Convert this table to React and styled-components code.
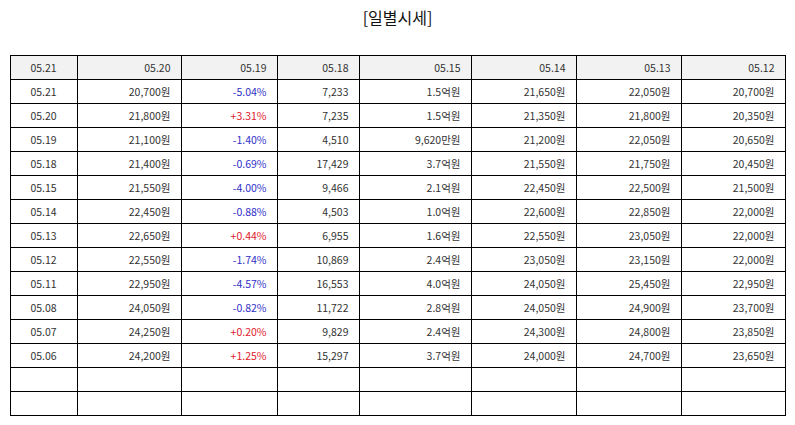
import React from 'react';
import styled, { createGlobalStyle } from 'styled-components';

const headers = ['05.21', '05.20', '05.19', '05.18', '05.15', '05.14', '05.13', '05.12'];
const colWidths = [67, 104, 96, 82, 112, 105, 105, 104];

const rows = [
	['05.21', '20,700원', '-5.04%', '7,233', '1.5억원', '21,650원', '22,050원', '20,700원'],
	['05.20', '21,800원', '+3.31%', '7,235', '1.5억원', '21,350원', '21,800원', '20,350원'],
	['05.19', '21,100원', '-1.40%', '4,510', '9,620만원', '21,200원', '22,050원', '20,650원'],
	['05.18', '21,400원', '-0.69%', '17,429', '3.7억원', '21,550원', '21,750원', '20,450원'],
	['05.15', '21,550원', '-4.00%', '9,466', '2.1억원', '22,450원', '22,500원', '21,500원'],
	['05.14', '22,450원', '-0.88%', '4,503', '1.0억원', '22,600원', '22,850원', '22,000원'],
	['05.13', '22,650원', '+0.44%', '6,955', '1.6억원', '22,550원', '23,050원', '22,000원'],
	['05.12', '22,550원', '-1.74%', '10,869', '2.4억원', '23,050원', '23,150원', '22,000원'],
	['05.11', '22,950원', '-4.57%', '16,553', '4.0억원', '24,050원', '25,450원', '22,950원'],
	['05.08', '24,050원', '-0.82%', '11,722', '2.8억원', '24,050원', '24,900원', '23,700원'],
	['05.07', '24,250원', '+0.20%', '9,829', '2.4억원', '24,300원', '24,800원', '23,850원'],
	['05.06', '24,200원', '+1.25%', '15,297', '3.7억원', '24,000원', '24,700원', '23,650원'],
];

const GlobalStyle = createGlobalStyle`
	body {
		margin: 0;
		background: #ffffff;
		font-family: 'Noto Sans CJK KR', 'Noto Sans', sans-serif;
		color: #222222;
	}
`;

const Page = styled.div`
	display: flex;
	flex-direction: column;
	align-items: center;
	padding: 6px 10px 0 10px;
`;

const Title = styled.h3`
	margin: 0 0 27px 0;
	font-size: 16px;
	font-weight: 400;
	line-height: 22px;
	color: #111111;
`;

const PriceTable = styled.table`
	width: 775px;
	border-collapse: collapse;
	table-layout: fixed;
	font-size: 10.5px;
`;

const HeadCell = styled.th`
	height: 23px;
	padding: 0 10px;
	border: 1px solid #000000;
	background-color: #f2f2f2;
	font-weight: 400;
	color: #333333;
	text-align: ${(props) => (props.first ? 'center' : 'right')};
`;

const Cell = styled.td`
	height: 23px;
	padding: 0 10px;
	border: 1px solid #000000;
	white-space: nowrap;
	text-align: ${(props) => (props.first ? 'center' : 'right')};
	color: ${(props) =>
		props.tone === 'up' ? '#e0202c' : props.tone === 'down' ? '#3030c8' : '#333333'};
`;

const toneOf = (value) => {
	if (value.startsWith('+')) return 'up';
	if (value.startsWith('-')) return 'down';
	return null;
};

const App = () => {
	return (
		<Page>
			<GlobalStyle />
			<Title>[일별시세]</Title>
			<PriceTable>
				<colgroup>
					{colWidths.map((w, i) => (
						<col key={i} style={{ width: w }} />
					))}
				</colgroup>
				<thead>
					<tr>
						{headers.map((h, i) => (
							<HeadCell key={i} first={i === 0}>
								{h}
							</HeadCell>
						))}
					</tr>
				</thead>
				<tbody>
					{rows.map((row, r) => (
						<tr key={r}>
							{row.map((value, i) => (
								<Cell key={i} first={i === 0} tone={i === 2 ? toneOf(value) : null}>
									{value}
								</Cell>
							))}
						</tr>
					))}
					{/* two empty rows at the end */}
					{[0, 1].map((r) => (
						<tr key={'blank' + r}>
							{headers.map((_, i) => (
								<Cell key={i} />
							))}
						</tr>
					))}
				</tbody>
			</PriceTable>
		</Page>
	);
};

export default App;
